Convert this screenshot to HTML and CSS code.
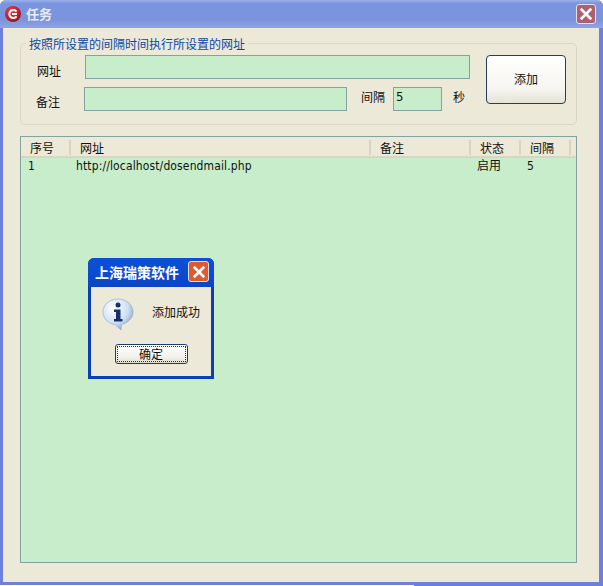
FILE: index.html
```html
<!DOCTYPE html>
<html lang="zh">
<head>
<meta charset="utf-8">
<title>任务</title>
<link rel="stylesheet" href="styles.css">
</head>
<body>
<div class="window">
  <header class="titlebar">
    <svg class="app-icon" viewBox="0 0 18 18" width="18" height="18">
      <defs><radialGradient id="red" cx="35%" cy="30%" r="85%"><stop offset="0" stop-color="#ee3a48"/><stop offset="1" stop-color="#8e1016"/></radialGradient></defs>
      <circle cx="9" cy="9" r="8" fill="url(#red)"/>
      <path d="M12.500 6.600A4 4 0 1 0 12.500 11.400" fill="none" stroke="#fff" stroke-width="2"/>
      <rect x="8" y="8" width="5" height="2" fill="#fff"/>
    </svg>
    <span class="title-text">任务</span>
    <button class="close close-main" aria-label="关闭">
      <svg viewBox="0 0 12 12" width="14" height="14"><path d="M1.500 1.500L10.500 10.500M10.500 1.500L1.500 10.500" stroke="#fff" stroke-width="2.200" fill="none"/></svg>
    </button>
  </header>
  <main class="content">
    <section class="group">
      <div class="legend">按照所设置的间隔时间执行所设置的网址</div>
      <div class="form">
        <div class="fields">
          <div class="row row-url">
            <label class="lbl">网址</label>
            <div class="input input-url"></div>
          </div>
          <div class="row row-note">
            <label class="lbl">备注</label>
            <div class="input input-note"></div>
            <label class="lbl-interval">间隔</label>
            <div class="input input-interval">5</div>
            <label class="lbl-sec">秒</label>
          </div>
        </div>
        <button class="add">添加</button>
      </div>
    </section>
    <section class="list">
      <div class="list-head">
        <div class="col">序号</div>
        <div class="col">网址</div>
        <div class="col">备注</div>
        <div class="col">状态</div>
        <div class="col">间隔</div>
      </div>
      <div class="list-row">
        <div class="cell">1</div>
        <div class="cell">http://localhost/dosendmail.php</div>
        <div class="cell"></div>
        <div class="cell">启用</div>
        <div class="cell">5</div>
      </div>
    </section>
  </main>
  <div class="dialog">
    <div class="dlg-title">
      <span class="dlg-title-text">上海瑞策软件</span>
      <button class="close close-dlg" aria-label="关闭">
        <svg viewBox="0 0 12 12" width="14" height="14"><path d="M1.500 1.500L10.500 10.500M10.500 1.500L1.500 10.500" stroke="#fff" stroke-width="2.200" fill="none"/></svg>
      </button>
    </div>
    <div class="dlg-body">
      <div class="dlg-msg">
        <svg class="info" viewBox="0 0 34 34" width="34" height="34">
          <defs><radialGradient id="bub" cx="35%" cy="30%" r="80%"><stop offset="0" stop-color="#ffffff"/><stop offset="0.6" stop-color="#cfe0f2"/><stop offset="1" stop-color="#7f9dc4"/></radialGradient></defs>
          <path d="M17 2C8 2 2 8 2 15C2 22 8 27 14 27.500L20 33L20.500 27.500C27 26 32 21 32 15C32 8 26 2 17 2Z" fill="url(#bub)" stroke="#8ba6c8" stroke-width="0.600"/>
          <circle cx="17" cy="8" r="2.500" fill="#16306e"/>
          <path d="M13 12.500H19.500V22H21.500V24.500H13V22H15V15H13Z" fill="#16306e"/>
        </svg>
        <span class="dlg-text">添加成功</span>
      </div>
      <button class="ok"><span class="ok-focus">确定</span></button>
    </div>
  </div>
</div>
</body>
</html>
```
FILE: styles.css
```css
* { box-sizing: border-box; }
html, body { margin: 0; padding: 0; background: #fff; }
body { width: 603px; height: 586px; overflow: hidden; font-family: "DejaVu Sans Condensed", "Noto Sans CJK SC", sans-serif; font-size: 12px; color: #111; }
.window { position: relative; width: 603px; height: 585px; display: flex; flex-direction: column; background: #6e7fdc; border-radius: 6px 6px 0 0; padding: 0 4px 3px 3px; }
.window::after { content: ""; position: absolute; left: 414px; right: 0; bottom: -1px; height: 1px; background: #6e7fc8; }
.titlebar { flex: none; height: 28px; margin: 0 -4px 0 -3px; padding: 0 7px 0 4px; display: flex; align-items: center; background: linear-gradient(#9db2ea 0, #7a95e0 12%, #7b93dc 70%, #8fa5e6 100%); border-radius: 6px 6px 0 0; }
.app-icon { flex: none; }
.title-text { margin-left: 4px; padding-bottom: 2px; font-family: "Noto Sans CJK SC", sans-serif; font-size: 13px; font-weight: 700; color: #e8ecfa; }
button { font-family: inherit; font-size: inherit; padding: 0; }
.close { display: flex; align-items: center; justify-content: center; border: 1px solid #e5e0ea; border-radius: 3px; width: 20px; height: 20px; }
.close-main { margin-left: auto; background: #ac6070; }
.content { flex: 1; background: #ece9d8; padding: 15px 22px 19px 17px; display: flex; flex-direction: column; }
.group { position: relative; height: 82px; flex: none; border: 1px solid #d9d6c5; border-radius: 5px; }
.legend { position: absolute; left: 5px; top: -7px; padding: 0 3px; background: #ece9d8; font-family: "Noto Sans CJK SC", sans-serif; color: #0d47a8; line-height: 14px; }
.form { display: flex; padding-top: 11px; }
.fields { width: 465px; display: flex; flex-direction: column; gap: 8px; }
.row { display: flex; align-items: center; height: 24px; font-family: "Noto Sans CJK SC", sans-serif; }
.lbl { width: 64px; padding-left: 16px; }
.row-url .lbl { margin-top: 6px; }
.row-note .lbl { width: 63px; padding-left: 15px; margin-top: 4px; }
.input { height: 24px; background: #c8edcb; border: 1px solid #84a29f; }
.input-url { width: 385px; }
.input-note { width: 263px; }
.lbl-interval { margin-left: 14px; width: 32px; margin-bottom: 6px; }
.input-interval { width: 49px; font-family: "DejaVu Sans Condensed", sans-serif; padding-left: 2px; line-height: 18px; font-size: 13px; }
.lbl-sec { margin-left: 11px; margin-bottom: 6px; }
.add { width: 80px; height: 49px; padding-bottom: 2px; border: 1px solid #243d60; border-radius: 4px; background: linear-gradient(#fff, #f6f5f0 70%, #e6e3d6); font-family: "Noto Sans CJK SC", sans-serif; color: #111; }
.list { flex: 1; margin-top: 11px; border: 1px solid #84a29f; background: #c8edcb; }
.list-head, .list-row { display: grid; grid-template-columns: 50px 300px 100px 50px 50px; }
.list-head { height: 21px; padding-top: 2px; background: #ece9d8; border-bottom: 2px solid #d8d5c4; align-items: center; font-family: "Noto Sans CJK SC", sans-serif; }
.col { padding-left: 9px; height: 15px; line-height: 15px; border-right: 2px solid #d8d5c4; }
.list-row { height: 17px; line-height: 17px; }
.cell { padding-left: 6px; font-family: "DejaVu Sans Condensed", "Noto Sans CJK SC", sans-serif; }
.cell:nth-child(1) { padding-left: 7px; }
.cell:nth-child(2) { padding-left: 5px; letter-spacing: 0.13px; }
.dialog { position: absolute; left: 88px; top: 258px; width: 126px; height: 121px; display: flex; flex-direction: column; background: #0b3fb8; border-radius: 6px 6px 0 0; padding: 0 3px 3px; }
.dlg-title { flex: none; height: 29px; margin: 0 -3px; padding: 0 5px 2px 7px; display: flex; align-items: center; justify-content: space-between; border-radius: 6px 6px 0 0; background: linear-gradient(#0a50d4, #0a4cd4 50%, #0a44c4); }
.dlg-title-text { color: #fff; font-family: "Noto Sans CJK SC", sans-serif; font-size: 14px; font-weight: 700; white-space: nowrap; }
.close-dlg { width: 21px; height: 21px; background: #db5a32; }
.dlg-body { flex: 1; background: #ece9d8; display: flex; flex-direction: column; align-items: center; }
.dlg-msg { width: 100%; height: 57px; display: flex; align-items: center; padding: 0 0 4px 10px; flex: none; }
.dlg-text { margin: 0 0 4px 17px; font-family: "Noto Sans CJK SC", sans-serif; }
.ok { width: 73px; height: 20px; flex: none; border: 1px solid #1c3a7a; border-radius: 3px; background: linear-gradient(#fff, #f2f1ea 70%, #dedbce); padding: 1px; font-family: "Noto Sans CJK SC", sans-serif; color: #111; }
.ok-focus { display: block; height: 100%; line-height: 13px; border: 1px dotted #333; }
```
